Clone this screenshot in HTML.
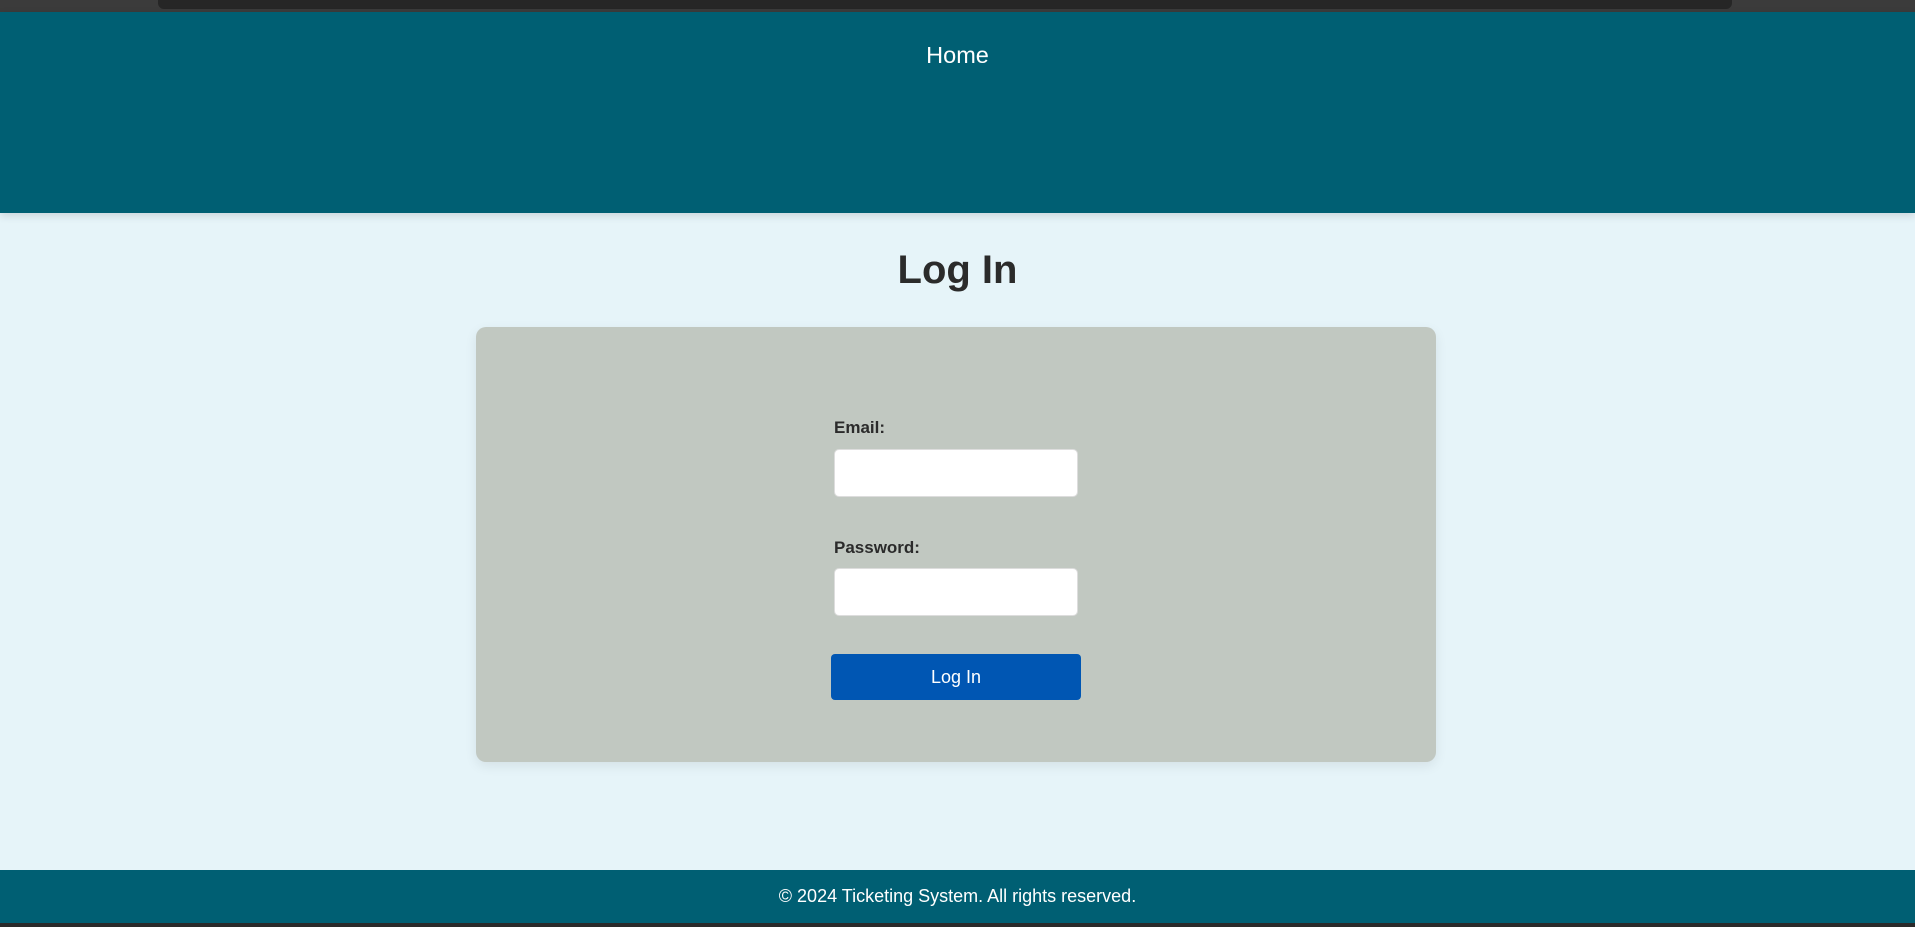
<!DOCTYPE html>
<html><head><meta charset="utf-8"><style>
*{margin:0;padding:0;box-sizing:border-box}
body{width:1915px;height:927px;overflow:hidden;background:#e6f4f9;font-family:"Liberation Sans",sans-serif;color:#333;position:relative}
.top{position:absolute;left:0;top:0;width:1915px;height:12px;background:#3b3b3b}
.top div{position:absolute;left:158px;width:1574px;top:0;height:9px;background:#262626;border-radius:0 0 6px 6px}
header{position:absolute;top:12px;left:0;width:1915px;height:201px;background:#005f73;box-shadow:0 3px 8px rgba(0,0,0,.12)}
header a{position:absolute;left:0;width:1915px;top:30px;text-align:center;color:#fff;font-size:23.5px;text-decoration:none}
h1{position:absolute;top:248px;left:0;width:1915px;text-align:center;font-size:40px;font-weight:bold;color:#2b2b2b}
.card{position:absolute;left:476px;top:327px;width:960px;height:435px;background:#c1c8c1;border-radius:10px;box-shadow:0 4px 12px rgba(0,0,0,.08)}
label{position:absolute;font-size:17px;font-weight:bold;color:#2b2b2b}
.in{position:absolute;width:244px;height:48px;background:#fff;border:1px solid #ddd;border-radius:5px}
.btn{position:absolute;left:355px;top:327px;width:250px;height:46px;background:#0056b3;border-radius:4px;color:#fff;font-size:18px;text-align:center;line-height:46px}
footer{position:absolute;left:0;top:870px;width:1915px;height:53px;background:#005f73;color:#fff;font-size:18px;text-align:center;line-height:53px}
.bot{position:absolute;left:0;top:923px;width:1915px;height:4px;background:#2a2a2a}
</style></head><body>
<div class="top"><div></div></div>
<header><a href="#">Home</a></header>
<h1>Log In</h1>
<div class="card">
<label style="left:358px;top:91px">Email:</label>
<div class="in" style="left:358px;top:122px"></div>
<label style="left:358px;top:211px">Password:</label>
<div class="in" style="left:358px;top:241px"></div>
<div class="btn">Log In</div>
</div>
<footer>© 2024 Ticketing System. All rights reserved.</footer>
<div class="bot"></div>
</body></html>
